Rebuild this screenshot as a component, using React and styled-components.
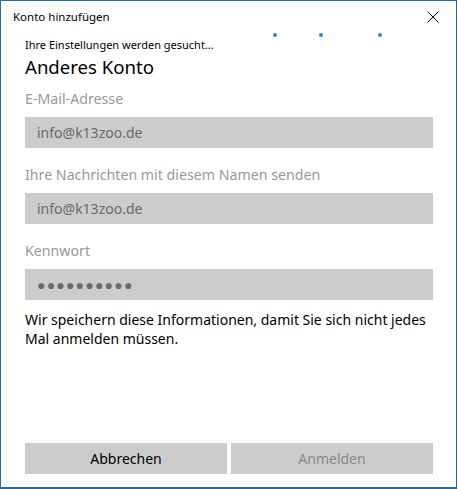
import React from "react";
import styled, { createGlobalStyle } from "styled-components";

const Global = createGlobalStyle`
  html, body { margin: 0; padding: 0; background: #ffffff; }
  body { font-family: "Noto Sans", "Open Sans", sans-serif; }
`;

const Window = styled.div`
  box-sizing: border-box;
  width: 457px;
  height: 489px;
  border: 1px solid #1c6cb4;
  border-bottom-width: 2px;
  background: #ffffff;
  display: flex;
  flex-direction: column;
  position: relative;
`;

const TitleBar = styled.div`
  height: 30px;
  display: flex;
  align-items: center;
  justify-content: space-between;
  padding: 0 12px 0 12px;
`;

const Title = styled.span`
  font-size: 11.5px;
  color: #000;
  margin-top: 1px;
`;

const CloseButton = styled.button`
  border: 0;
  background: transparent;
  padding: 0;
  width: 12px;
  height: 12px;
  display: flex;
  margin-right: 5px;
  margin-top: 2px;
`;

const Dots = styled.div`
  position: absolute;
  top: 32px;
  left: 0;
  width: 100%;
  height: 4px;
`;

const Dot = styled.span`
  position: absolute;
  top: 0;
  width: 4px;
  height: 4px;
  border-radius: 50%;
  background: #2b86d8;
  left: ${(p) => p.$x}px;
`;

const Content = styled.div`
  flex: 1;
  display: flex;
  flex-direction: column;
  padding: 6px 23px 0 24px;
`;

const Status = styled.div`
  font-size: 11px;
  color: #000;
  line-height: 16px;
`;

const Heading = styled.h1`
  margin: 2px 0 0 0;
  font-weight: 400;
  font-size: 18.6px;
  line-height: 24px;
  color: #000;
`;

const Label = styled.div`
  font-size: 14.2px;
  color: #999999;
  line-height: 20px;
  margin-top: ${(p) => p.$top}px;
`;

const Field = styled.div`
  height: 31px;
  margin-top: 8px;
  background: #cccccc;
  display: flex;
  align-items: center;
  padding-left: 12px;
  font-size: 14px;
  color: #6a6a6a;
  letter-spacing: ${(p) => (p.$password ? "1.2px" : "0")};
`;

const Note = styled.p`
  margin: 10px 0 0 0;
  font-size: 14px;
  line-height: 19px;
  color: #000;
`;

const Footer = styled.div`
  display: flex;
  gap: 4px;
  padding: 0 23px 13px 24px;
`;

const Button = styled.button`
  flex: 1;
  height: 31px;
  border: 0;
  background: #cccccc;
  font-family: "Noto Sans", "Open Sans", sans-serif;
  font-size: 14px;
  color: ${(p) => (p.$disabled ? "#8a8a8a" : "#000")};
  padding: 0;
`;

export default function App() {
  return (
    <>
      <Global />
      <Window>
        <TitleBar>
          <Title>Konto hinzufügen</Title>
          <CloseButton aria-label="Schließen">
            <svg width="12" height="12" viewBox="0 0 12 12">
              <path d="M0.5 0.5 L11.5 11.5 M11.5 0.5 L0.5 11.5" stroke="#000" strokeWidth="1" fill="none" />
            </svg>
          </CloseButton>
        </TitleBar>
        <Dots>
          <Dot $x={272} />
          <Dot $x={318} />
          <Dot $x={377} />
        </Dots>
        <Content>
          <Status>Ihre Einstellungen werden gesucht...</Status>
          <Heading>Anderes Konto</Heading>
          <Label $top={10}>E-Mail-Adresse</Label>
          <Field>info@k13zoo.de</Field>
          <Label $top={17}>Ihre Nachrichten mit diesem Namen senden</Label>
          <Field>info@k13zoo.de</Field>
          <Label $top={17}>Kennwort</Label>
          <Field $password>●●●●●●●●●●</Field>
          <Note>Wir speichern diese Informationen, damit Sie sich nicht jedes Mal anmelden müssen.</Note>
        </Content>
        <Footer>
          <Button>Abbrechen</Button>
          <Button $disabled>Anmelden</Button>
        </Footer>
      </Window>
    </>
  );
}
